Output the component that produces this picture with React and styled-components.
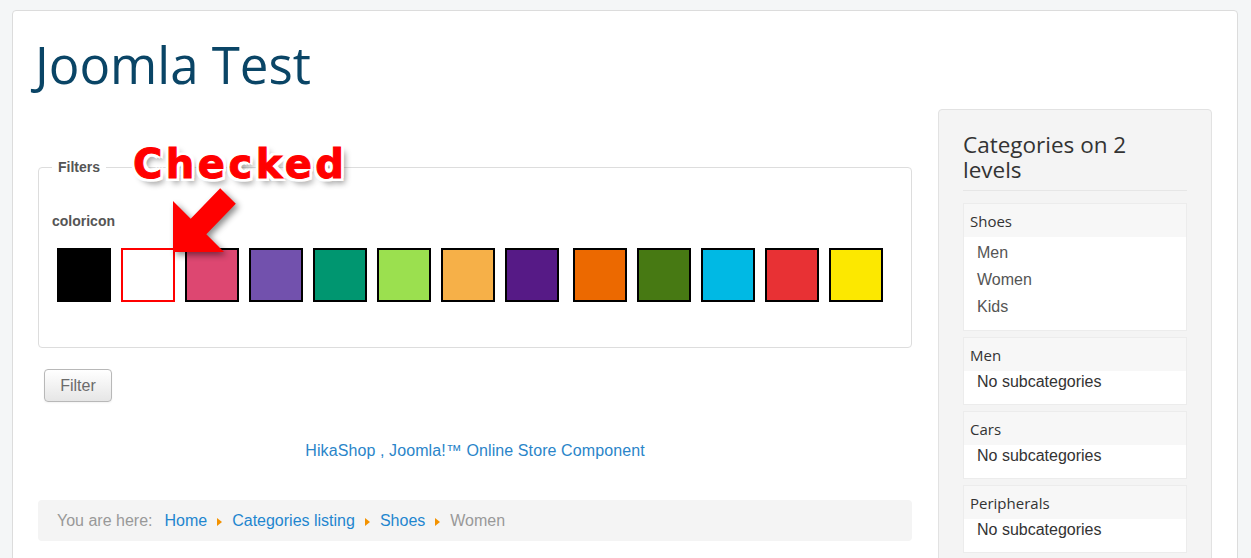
import React from 'react';
import styled, { createGlobalStyle } from 'styled-components';

const colors = [
  '#000000', '#ffffff', '#dd4771', '#7251ad', '#009670', '#9be04f', '#f6b048',
  '#561a86', '#ec6900', '#477913', '#00b9e4', '#e83134', '#fce800',
];

const categories = [
  { name: 'Shoes', children: ['Men', 'Women', 'Kids'] },
  { name: 'Men', children: [] },
  { name: 'Cars', children: [] },
  { name: 'Peripherals', children: [] },
];

const GlobalStyle = createGlobalStyle`
  html, body {
    margin: 0;
    padding: 0;
  }
  body {
    background: #f4f6f7;
    font-family: 'Liberation Sans', Arial, sans-serif;
    font-size: 16px;
    color: #333;
    overflow: hidden;
  }
`;

const Card = styled.div`
  margin: 10px 13px 0 12px;
  background: #fff;
  border: 1px solid #dcdcdc;
  border-radius: 4px;
  padding: 21px 25px 0;
  min-height: 600px;
  box-sizing: border-box;
`;

const Title = styled.h1`
  margin: 0 0 13px -3px;
  font-family: 'Open Sans', sans-serif;
  font-weight: 400;
  font-size: 51px;
  line-height: 64px;
  color: #0a4566;
`;

const Body = styled.div`
  display: grid;
  grid-template-columns: 874px 274px;
  gap: 26px;
  align-items: start;
`;

const Main = styled.div`
  position: relative;
  padding-top: 48px;
`;

const Fieldset = styled.fieldset`
  margin: 0;
  padding: 0 13px 45px;
  border: 1px solid #ddd;
  border-radius: 4px;
`;

const Legend = styled.legend`
  padding: 0 6px;
  font-size: 14px;
  line-height: 20px;
  font-weight: bold;
  color: #555;
`;

const FieldLabel = styled.div`
  margin-top: 34px;
  font-size: 14px;
  line-height: 20px;
  font-weight: bold;
  color: #555;
`;

const Swatches = styled.div`
  display: flex;
  gap: 10px;
  margin: 17px 0 0 5px;
`;

const Swatch = styled.span`
  width: 54px;
  height: 54px;
  box-sizing: border-box;
  border: 2px solid ${(p) => (p.$checked ? '#ff0000' : '#000')};
  background: ${(p) => p.$color};
  margin-left: ${(p) => (p.$wide ? '4px' : '0')};
`;

const FilterButton = styled.button`
  margin: 21px 0 0 6px;
  width: 68px;
  height: 33px;
  font-family: 'Liberation Sans', Arial, sans-serif;
  font-size: 16px;
  color: #6b6b6b;
  background: linear-gradient(#ffffff, #e6e6e6);
  border: 1px solid #b8b8b8;
  border-radius: 4px;
  box-shadow: 0 1px 2px rgba(0, 0, 0, 0.05);
`;

const Credit = styled.div`
  margin-top: 39px;
  text-align: center;
  line-height: 20px;
  letter-spacing: 0.1px;
  color: #2a85c9;
`;

const Breadcrumb = styled.div`
  margin-top: 39px;
  background: #f4f4f4;
  border-radius: 4px;
  height: 41px;
  padding: 0 19px;
  display: flex;
  align-items: center;
  color: #999;
`;

const Crumb = styled.span`
  color: ${(p) => (p.$active ? '#999' : '#1f86cf')};
`;

const Sep = styled.span`
  display: inline-block;
  width: 0;
  height: 0;
  border-top: 4px solid transparent;
  border-bottom: 4px solid transparent;
  border-left: 5px solid #f39200;
  margin: 3px 10px 0 10px;
`;

const Here = styled.span`
  margin-right: 12px;
`;

const Note = styled.div`
  position: absolute;
  left: 95px;
  top: 35px;
  z-index: 2;
  font-family: 'DejaVu Sans', sans-serif;
  font-weight: bold;
  font-size: 40px;
  line-height: 40px;
  letter-spacing: 3.5px;
  color: #ff0000;
  -webkit-text-stroke: 1px #ff0000;
  text-shadow:
    3px 0 0 #fff, -3px 0 0 #fff, 0 3px 0 #fff, 0 -3px 0 #fff,
    2px 2px 0 #fff, -2px -2px 0 #fff, 2px -2px 0 #fff, -2px 2px 0 #fff,
    3px 3px 0 #fff, -3px 3px 0 #fff, 3px -3px 0 #fff, -3px -3px 0 #fff,
    4px 5px 6px rgba(0, 0, 0, 0.45);
`;

const Arrow = styled.svg`
  position: absolute;
  left: 92px;
  top: 71px;
  z-index: 2;
  overflow: visible;
  filter: drop-shadow(3px 3px 3px rgba(0, 0, 0, 0.45));
`;

const Sidebar = styled.aside`
  background: #f4f4f4;
  border: 1px solid #e2e2e2;
  border-radius: 4px;
  padding: 22px 24px 0;
  min-height: 480px;
`;

const SideTitle = styled.h3`
  margin: 0;
  font-family: 'Open Sans', sans-serif;
  font-weight: 400;
  font-size: 22.5px;
  line-height: 25px;
  color: #333;
`;

const Rule = styled.hr`
  margin: 8px 0 12px;
  border: 0;
  border-top: 1px solid #e6e6e6;
`;

const CatList = styled.div`
  display: flex;
  flex-direction: column;
  gap: 6px;
`;

const CatBox = styled.div`
  background: #fff;
  border: 1px solid #ececec;
`;

const CatHead = styled.div`
  background: #f7f7f7;
  padding: 7px 6px 6px;
  font-family: 'Open Sans', sans-serif;
  font-size: 15px;
  line-height: 20px;
  color: #333;
`;

const CatBody = styled.div`
  padding: ${(p) => (p.$list ? '2px 6px 10px 13px' : '0 6px 11px 13px')};
`;

const CatLink = styled.div`
  line-height: 27px;
  color: #555;
`;

const Empty = styled.div`
  line-height: 22px;
  color: #333;
`;

export default function App() {
  return (
    <>
      <GlobalStyle />
      <Card>
        <Title>Joomla Test</Title>
        <Body>
          <Main>
            <Note>Checked</Note>
            <Arrow width="110" height="80" viewBox="0 0 110 80">
              <polygon
                points="43,72 43,21 60.7,38.7 90.2,8.2 105.8,23.8 76.3,54.3 94,72"
                fill="#ff0000"
              />
            </Arrow>
            <Fieldset>
              <Legend>Filters</Legend>
              <FieldLabel>coloricon</FieldLabel>
              <Swatches>
                {colors.map((c, i) => (
                  <Swatch key={c} $color={c} $checked={i === 1} $wide={i === 8} />
                ))}
              </Swatches>
            </Fieldset>
            <FilterButton>Filter</FilterButton>
            <Credit>HikaShop , Joomla!™ Online Store Component</Credit>
            <Breadcrumb>
              <Here>You are here:</Here>
              <Crumb>Home</Crumb>
              <Sep />
              <Crumb>Categories listing</Crumb>
              <Sep />
              <Crumb>Shoes</Crumb>
              <Sep />
              <Crumb $active>Women</Crumb>
            </Breadcrumb>
          </Main>
          <Sidebar>
            <SideTitle>Categories on 2 levels</SideTitle>
            <Rule />
            <CatList>
              {categories.map((cat) => (
                <CatBox key={cat.name}>
                  <CatHead>{cat.name}</CatHead>
                  <CatBody $list={cat.children.length > 0}>
                    {cat.children.length ? (
                      cat.children.map((child) => <CatLink key={child}>{child}</CatLink>)
                    ) : (
                      <Empty>No subcategories</Empty>
                    )}
                  </CatBody>
                </CatBox>
              ))}
            </CatList>
          </Sidebar>
        </Body>
      </Card>
    </>
  );
}
